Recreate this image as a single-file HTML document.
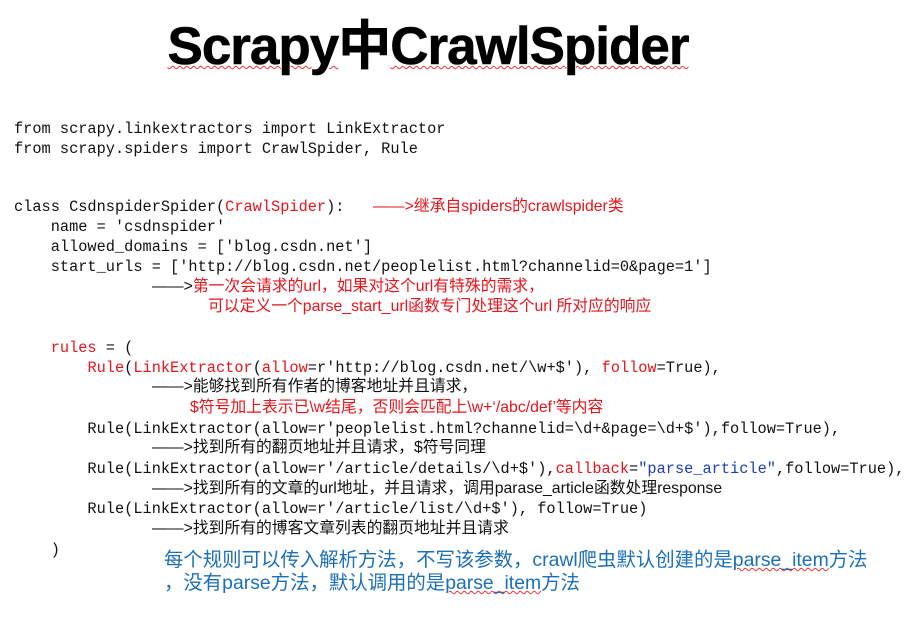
<!DOCTYPE html>
<html><head><meta charset="utf-8"><style>
body{margin:0;width:911px;height:621px;background:#fff;position:relative;overflow:hidden}
.t{position:absolute;left:0;top:4px;width:856px;text-align:center;font:bold 53px "Liberation Sans","Noto Sans CJK SC",sans-serif;color:#000;letter-spacing:-1px;-webkit-text-stroke:0.6px #000}
.c{position:absolute;white-space:pre;font:15.3px "Liberation Mono","Noto Sans CJK SC",monospace;color:#111;line-height:20px}
.n{position:absolute;white-space:pre;font:15.8px "Liberation Sans","Noto Sans CJK SC",sans-serif;color:#111;line-height:20px}
.r{color:#e8141b}
.b{position:absolute;white-space:pre;font:19.4px "Liberation Sans","Noto Sans CJK SC",sans-serif;color:#1c6fb8;line-height:23px}
.w{text-decoration:underline wavy #e33;text-decoration-thickness:1px}
</style></head><body>
<div class="t"><span class="w">Scrapy</span>中<span class="w">CrawlSpider</span></div>
<div class="c" style="left:14px;top:119px">from scrapy.linkextractors import LinkExtractor</div>
<div class="c" style="left:14px;top:139px">from scrapy.spiders import CrawlSpider, Rule</div>
<div class="c" style="left:14px;top:197px">class CsdnspiderSpider(<span class="r">CrawlSpider</span>):</div>
<div class="n r" style="left:373px;top:197px">——&gt;继承自spiders的crawlspider类</div>
<div class="c" style="left:14px;top:217px">    name = 'csdnspider'</div>
<div class="c" style="left:14px;top:237px">    allowed_domains = ['blog.csdn.net']</div>
<div class="c" style="left:14px;top:257px">    start_urls = ['http://blog.csdn.net/peoplelist.html?channelid=0&amp;page=1']</div>
<div class="n" style="left:152px;top:277px">——&gt;<span class="r">第一次会请求的url，如果对这个url有特殊的需求，</span></div>
<div class="n r" style="left:208px;top:297px">可以定义一个parse_start_url函数专门处理这个url 所对应的响应</div>
<div class="c" style="left:14px;top:338px">    <span class="r">rules</span> = (</div>
<div class="c" style="left:14px;top:358px">        <span class="r">Rule</span>(<span class="r">LinkExtractor</span>(<span class="r">allow</span>=r'http://blog.csdn.net/\w+$'), <span class="r">follow</span>=True),</div>
<div class="n" style="left:152px;top:377px">——&gt;能够找到所有作者的博客地址并且请求，</div>
<div class="n r" style="left:190px;top:398px">$符号加上表示已\w结尾，否则会匹配上\w+‘/abc/def’等内容</div>
<div class="c" style="left:14px;top:419px">        Rule(LinkExtractor(allow=r'peoplelist.html?channelid=\d+&amp;page=\d+$'),follow=True),</div>
<div class="n" style="left:152px;top:438px">——&gt;找到所有的翻页地址并且请求，$符号同理</div>
<div class="c" style="left:14px;top:459px">        Rule(LinkExtractor(allow=r'/article/details/\d+$'),<span class="r">callback</span>=<span style="color:#1c3fb8">"parse_article"</span>,follow=True),</div>
<div class="n" style="left:152px;top:479px">——&gt;找到所有的文章的url地址，并且请求，调用parase_article函数处理response</div>
<div class="c" style="left:14px;top:499px">        Rule(LinkExtractor(allow=r'/article/list/\d+$'), follow=True)</div>
<div class="n" style="left:152px;top:519px">——&gt;找到所有的博客文章列表的翻页地址并且请求</div>
<div class="c" style="left:14px;top:540px">    )</div>
<div class="b" style="left:164px;top:549px">每个规则可以传入解析方法，不写该参数，crawl爬虫默认创建的是<span class="w">parse_item</span>方法</div>
<div class="b" style="left:164px;top:572px">，没有parse方法，默认调用的是<span class="w">parse_item</span>方法</div>
</body></html>
